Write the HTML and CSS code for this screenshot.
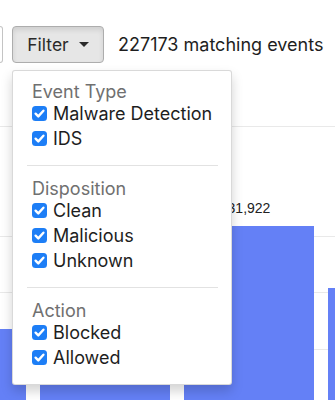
FILE: index.html
```html
<!DOCTYPE html>
<html lang="en">
<head>
<meta charset="utf-8">
<title>Events</title>
<link rel="stylesheet" href="styles.css">
</head>
<body>
<div class="toolbar">
  <button class="btn btn-prev" type="button"></button>
  <div class="filter">
    <button class="btn btn-filter" type="button">Filter <span class="caret"></span></button>
    <div class="menu">
      <div class="menu-title">Event Type</div>
      <label class="opt"><span class="box"><svg viewBox="0 0 15 15"><path d="M3.6 7.7 L6.3 10.4 L11.4 4.7"/></svg></span>Malware Detection</label>
      <label class="opt"><span class="box"><svg viewBox="0 0 15 15"><path d="M3.6 7.7 L6.3 10.4 L11.4 4.7"/></svg></span>IDS</label>
      <hr class="divider">
      <div class="menu-title">Disposition</div>
      <label class="opt"><span class="box"><svg viewBox="0 0 15 15"><path d="M3.6 7.7 L6.3 10.4 L11.4 4.7"/></svg></span>Clean</label>
      <label class="opt"><span class="box"><svg viewBox="0 0 15 15"><path d="M3.6 7.7 L6.3 10.4 L11.4 4.7"/></svg></span>Malicious</label>
      <label class="opt"><span class="box"><svg viewBox="0 0 15 15"><path d="M3.6 7.7 L6.3 10.4 L11.4 4.7"/></svg></span>Unknown</label>
      <hr class="divider">
      <div class="menu-title">Action</div>
      <label class="opt"><span class="box"><svg viewBox="0 0 15 15"><path d="M3.6 7.7 L6.3 10.4 L11.4 4.7"/></svg></span>Blocked</label>
      <label class="opt"><span class="box"><svg viewBox="0 0 15 15"><path d="M3.6 7.7 L6.3 10.4 L11.4 4.7"/></svg></span>Allowed</label>
    </div>
  </div>
  <span class="count">227173 matching events</span>
</div>
<div class="chart">
  <div class="bars">
    <div class="col"><div class="bar" style="height:91px"></div></div>
    <div class="col"><div class="bar" style="height:230px"></div></div>
    <div class="col"><div class="label">31,922</div><div class="bar" style="height:194px"></div></div>
    <div class="col"><div class="bar" style="height:132px"></div></div>
  </div>
</div>
</body>
</html>
```
FILE: styles.css
```css
html, body {
  margin: 0;
  padding: 0;
  height: 400px;
  overflow: hidden;
  background: #fff;
}
body {
  font-family: Inter, "Noto Sans", sans-serif;
  color: #222;
  padding-top: 26px;
  box-sizing: border-box;
}
.toolbar {
  display: flex;
  align-items: center;
  height: 37px;
  position: relative;
  z-index: 2;
}
.btn {
  box-sizing: border-box;
  height: 37px;
  border-radius: 4px;
  font-family: inherit;
  font-size: 17.5px;
  padding: 0;
}
.btn-prev {
  width: 3px;
  margin-right: 9px;
  background: #fff;
  border: 1px solid #c4c4c4;
  border-left: 0;
  border-radius: 0 4px 4px 0;
}
.filter {
  position: relative;
}
.btn-filter {
  width: 92px;
  display: flex;
  align-items: center;
  justify-content: center;
  gap: 10px;
  background: #e6e6e6;
  border: 1px solid #adadad;
  box-shadow: inset 0 3px 5px rgba(0, 0, 0, 0.1);
  color: #2a2a2a;
}
.caret {
  width: 0;
  height: 0;
  border-left: 5px solid transparent;
  border-right: 5px solid transparent;
  border-top: 5px solid #2a2a2a;
}
.count {
  margin-left: 14px;
  font-size: 18px;
  color: #1e1e1e;
  white-space: nowrap;
}
.menu {
  position: absolute;
  top: calc(100% + 7px);
  left: 0;
  width: 220px;
  box-sizing: border-box;
  background: #fff;
  border: 1px solid rgba(0, 0, 0, 0.15);
  border-radius: 3px;
  box-shadow: 0 6px 12px rgba(0, 0, 0, 0.175);
  padding: 11px 0 14px;
  font-size: 18px;
}
.menu-title {
  padding: 0 19px;
  line-height: 19px;
  color: #707070;
}
.opt {
  display: flex;
  align-items: center;
  height: 25px;
  padding-left: 19px;
  gap: 6px;
  color: #1e1e1e;
}
.box {
  width: 15px;
  height: 15px;
  border-radius: 3.5px;
  background: #1d7ef6;
  display: inline-flex;
  flex-shrink: 0;
}
.box svg {
  width: 15px;
  height: 15px;
}
.box path {
  fill: none;
  stroke: #fff;
  stroke-width: 2.4;
  stroke-linecap: round;
  stroke-linejoin: round;
}
.divider {
  border: 0;
  border-top: 1px solid #e2e2e2;
  margin: 14px 13px 13px 14px;
}
.chart {
  height: 357px;
  overflow: hidden;
  background-image:
    linear-gradient(#e9e9e9, #e9e9e9),
    linear-gradient(#e9e9e9, #e9e9e9),
    linear-gradient(#e9e9e9, #e9e9e9),
    linear-gradient(#e9e9e9, #e9e9e9);
  background-size: 100% 1px;
  background-repeat: no-repeat;
  background-position: 0 63px, 0 173px, 0 229px, 0 286px;
}
.bars {
  display: flex;
  align-items: flex-end;
  gap: 14px;
  height: 100%;
  margin-left: -104px;
}
.col {
  width: 130px;
  flex-shrink: 0;
  height: 100%;
  display: flex;
  flex-direction: column;
  align-items: center;
  justify-content: flex-end;
}
.label {
  font-family: "Liberation Sans", Arial, sans-serif;
  font-size: 14px;
  line-height: 16px;
  color: #222;
  margin-bottom: 10px;
}
.bar {
  width: 100%;
  background: #6480f6;
}
```
